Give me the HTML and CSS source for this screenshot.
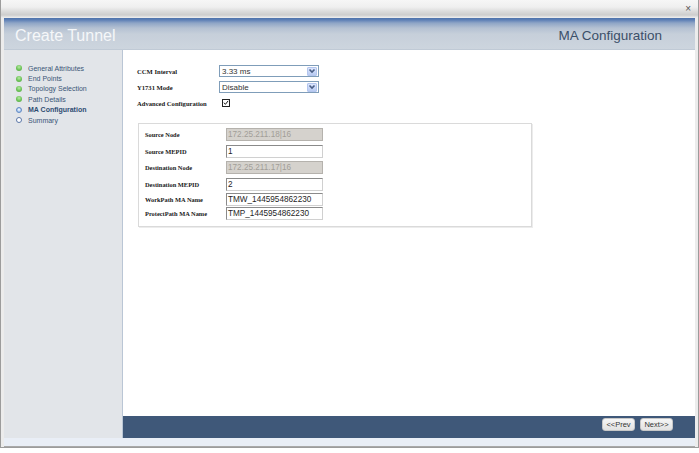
FILE: index.html
```html
<!DOCTYPE html>
<html>
<head>
<meta charset="utf-8">
<title>Create Tunnel</title>
<link rel="stylesheet" href="styles.css">
</head>
<body>
<div class="window">
  <div class="titlebar"><span class="close">×</span></div>
  <div class="frame">
    <div class="header">
      <h1 class="title">Create Tunnel</h1>
      <h2 class="subtitle">MA Configuration</h2>
    </div>
    <div class="main">
      <nav class="sidebar">
        <ul class="steps">
          <li class="step done"><span class="dot"></span>General Attributes</li>
          <li class="step done"><span class="dot"></span>End Points</li>
          <li class="step done"><span class="dot"></span>Topology Selection</li>
          <li class="step done"><span class="dot"></span>Path Details</li>
          <li class="step current"><span class="dot"></span>MA Configuration</li>
          <li class="step todo"><span class="dot"></span>Summary</li>
        </ul>
      </nav>
      <div class="content">
        <div class="page">
          <div class="form">
            <label class="lbl">CCM Interval</label>
            <div class="select"><span class="sel-text">3.33 ms</span><span class="sel-btn"><svg width="8" height="8" viewBox="0 0 8 8"><path d="M1.5 2.5 L4 5 L6.5 2.5" fill="none" stroke="#4a5f86" stroke-width="1.6"/></svg></span></div>
            <label class="lbl">Y1731 Mode</label>
            <div class="select"><span class="sel-text">Disable</span><span class="sel-btn"><svg width="8" height="8" viewBox="0 0 8 8"><path d="M1.5 2.5 L4 5 L6.5 2.5" fill="none" stroke="#4a5f86" stroke-width="1.6"/></svg></span></div>
            <label class="lbl">Advanced Configuration</label>
            <div class="chk-cell"><span class="checkbox"><svg width="8" height="8" viewBox="0 0 8 8"><path d="M1.3 3.6 L3.2 5.8 L6.8 1.2" fill="none" stroke="#111" stroke-width="1.3"/></svg></span></div>
          </div>
          <div class="box">
            <label class="lbl2">Source Node</label>
            <div class="field disabled">172.25.211.18|16</div>
            <label class="lbl2">Source MEPID</label>
            <div class="field">1</div>
            <label class="lbl2">Destination Node</label>
            <div class="field disabled">172.25.211.17|16</div>
            <label class="lbl2">Destination MEPID</label>
            <div class="field">2</div>
            <label class="lbl2">WorkPath MA Name</label>
            <div class="field">TMW_1445954862230</div>
            <label class="lbl2">ProtectPath MA Name</label>
            <div class="field">TMP_1445954862230</div>
          </div>
        </div>
        <div class="footer">
          <button class="btn">&lt;&lt;Prev</button>
          <button class="btn">Next&gt;&gt;</button>
        </div>
      </div>
    </div>
    <div class="strip"></div>
  </div>
</div>
</body>
</html>
```
FILE: styles.css
```css
* { box-sizing: border-box; }
html, body { margin: 0; padding: 0; }
body {
  width: 699px;
  height: 453px;
  background: #ffffff;
  font-family: "Liberation Sans", Arial, sans-serif;
  overflow: hidden;
}
.window {
  height: 448px;
  border: 1px solid #9c9c9c;
  border-top: none;
  background: #ececec;
}
.titlebar {
  height: 18px;
  background: linear-gradient(#f6f6f6 0, #efefef 7px, #d9d9d9 12px, #cdcdcd 15px, #e4e4e4 17px, #f0f0f0 18px);
  position: relative;
}
.close {
  position: absolute;
  right: 7px;
  top: 3px;
  font-size: 10px;
  line-height: 12px;
  color: #555;
}
.frame {
  padding: 0 3px 0 3px;
}
.header {
  height: 32px;
  display: flex;
  align-items: center;
  justify-content: space-between;
  padding: 3px 33px 0 11px;
  background: linear-gradient(#4e72ab 0, #5e80b6 2px, #8ea5c6 5px, #b4c1d2 10px, #c6cfda 16px, #cdd5de 31px, #b3bfcd 32px);
}
.title {
  margin: 0;
  font-weight: normal;
  font-size: 16px;
  color: #f5f7f9;
}
.subtitle {
  margin: 0;
  font-weight: normal;
  font-size: 13.5px;
  color: #3b4f69;
}
.main {
  height: 388px;
  display: flex;
}
.sidebar {
  width: 119px;
  flex: none;
  background: #e2e5e9;
  border-right: 1px solid #bac6d5;
}
.steps {
  list-style: none;
  margin: 0;
  padding: 13px 0 0 12px;
}
.step {
  display: flex;
  align-items: center;
  gap: 6px;
  height: 10.4px;
  font-size: 7px;
  color: #3a5577;
}
.step.current { font-weight: bold; color: #2e4c72; }
.dot {
  width: 6px;
  height: 6px;
  border-radius: 50%;
  flex: none;
}
.done .dot {
  background: radial-gradient(circle at 50% 35%, #b7eaa5 0, #6cc257 55%, #4aa33a 100%);
}
.current .dot {
  background: radial-gradient(circle at 50% 40%, #ffffff 0, #a9c8ee 60%);
  border: 1px solid #5f88c4;
}
.todo .dot {
  background: #ffffff;
  border: 1px solid #5b77a8;
}
.content {
  flex: 1;
  display: flex;
  flex-direction: column;
  background: #ffffff;
}
.page {
  flex: 1;
  padding: 13px 0 0 14px;
}
.form {
  display: grid;
  grid-template-columns: 82px 100px;
  grid-auto-rows: 16px;
  align-items: center;
}
.lbl, .lbl2 {
  font-family: "Liberation Serif", "Times New Roman", serif;
  font-weight: bold;
  font-size: 6.6px;
  color: #1a1a1a;
}
.lbl2 { font-size: 6.4px; }
.select {
  height: 12px;
  border: 1px solid #7f9db9;
  background: #fff;
  display: flex;
  align-items: center;
  justify-content: space-between;
  padding: 0 1px 0 2px;
}
.sel-text {
  font-size: 8px;
  color: #333;
}
.sel-btn {
  width: 10px;
  height: 9px;
  background: linear-gradient(#dbe5fd, #b9cbf2);
  border: 1px solid #b4c6ee;
  border-radius: 1px;
  display: flex;
  align-items: center;
  justify-content: center;
}
.sel-btn svg { display: block; }
.chk-cell {
  padding-left: 3px;
  display: flex;
  align-items: center;
}
.checkbox {
  width: 8px;
  height: 8px;
  border: 1px solid #222;
  background: #fff;
  display: flex;
  align-items: center;
  justify-content: center;
}
.checkbox svg { display: block; width: 6px; height: 6px; }
.box {
  margin: 12px 0 0 1px;
  width: 394px;
  height: 104px;
  border: 1px solid #dadada;
  box-shadow: 1px 1px 0 #ececec;
  padding: 4px 0 0 6px;
  display: grid;
  grid-template-columns: 81px 97px;
  grid-template-rows: 17px 16px 17px 15px 14px 13px;
  align-items: start;
}
.box .lbl2 {
  line-height: 13px;
}
.field {
  height: 13px;
  border: 1px solid #8a8a8a;
  border-right-color: #d0d0d0;
  border-bottom-color: #d0d0d0;
  background: #fff;
  font-size: 8.2px;
  line-height: 11px;
  padding-left: 1px;
  color: #1e1e1e;
  white-space: nowrap;
}
.field.disabled {
  background: #d5d2cd;
  color: #a29e98;
  border-color: #b5b2ad;
}
.footer {
  height: 22px;
  flex: none;
  background: #3f5879;
  display: flex;
  justify-content: flex-end;
  align-items: flex-start;
  gap: 5px;
  padding: 2px 22px 0 0;
}
.btn {
  width: 33px;
  height: 13px;
  padding: 0;
  margin: 0;
  border: 1px solid #c7c7c7;
  border-radius: 3px;
  background: linear-gradient(#f6f6f6, #e2e2e2);
  font-family: "Liberation Sans", Arial, sans-serif;
  font-size: 7.5px;
  color: #333;
}
.strip {
  height: 9px;
  background: #e9eef6;
  border-bottom: 1px solid #a9a9a9;
}
```
